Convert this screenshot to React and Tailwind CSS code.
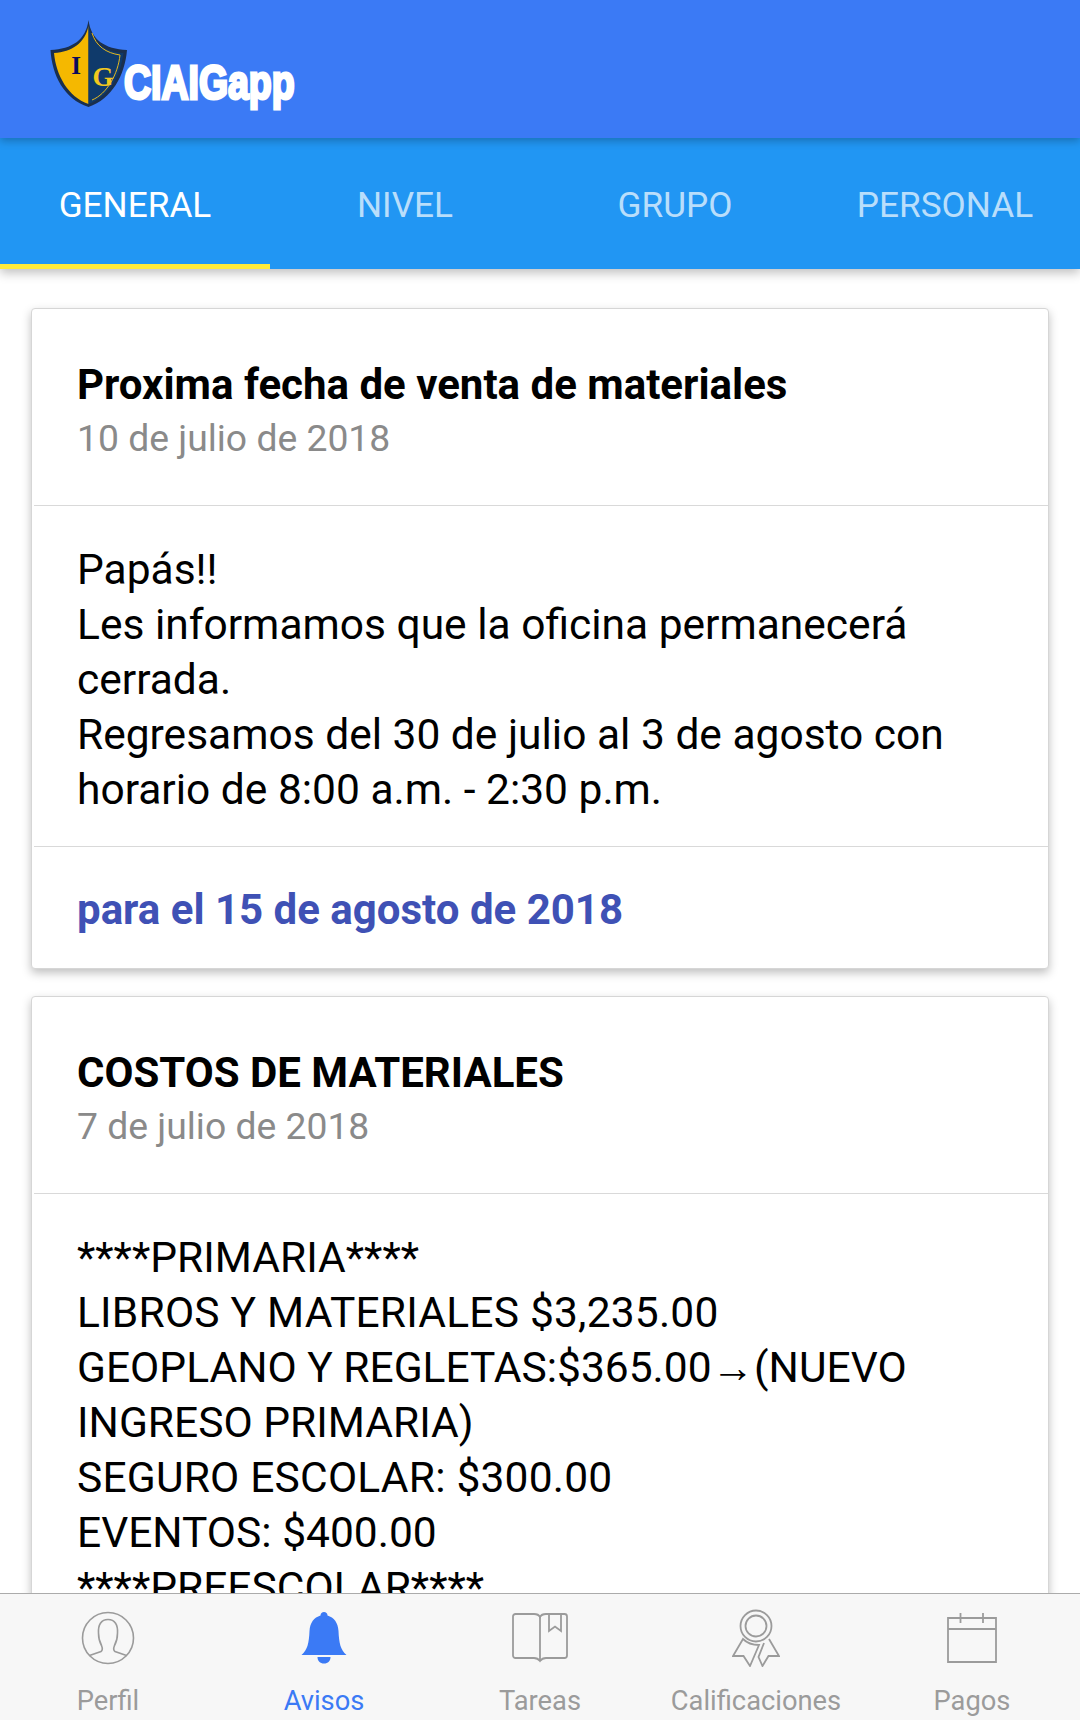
const roboto = "font-['Roboto',sans-serif]"

function Shield() {
    return (
        <svg width="78" height="88" viewBox="0 0 78 88" className="shrink-0">
            <path d="M38.5 0 C36 20 22 29 0.500 30 C2 55 14 79 38.500 87 C62 79 75 55 77 30 C55 29 41 20 38.500 0 Z" fill="#1a2f4d" />
            <path d="M38.500 6 C35 23 22 32 4 33 C6 55 18 77 38.500 84 Z" fill="#f5b800" />
            <path d="M38.500 6 C42 23 55 32 73.500 33 C71 55 59 77 38.500 84 Z" fill="#0f3a6b" />
            <path d="M42 13 C46 26 56 33 70 35 C68 54 57 74 42 80" fill="none" stroke="#e5b91f" strokeWidth="1" />
            <text x="26" y="54" fontFamily="Liberation Serif" fontWeight="700" fontSize="25" fill="#0b0b5c" textAnchor="middle">I</text>
            <text x="53" y="66" fontFamily="Liberation Serif" fontWeight="700" fontSize="27" fill="#f2c81e" textAnchor="middle">G</text>
        </svg>
    )
}

function ProfileIcon() {
    return (
        <svg width="54" height="54" viewBox="0 0 54 54" fill="none" stroke="#9b9b9b" strokeWidth="1.600">
            <circle cx="27" cy="27" r="25.500" />
            <path d="M8.500 44.500 L20 40.500 C21.500 39.500 21.500 37 20.500 34.500 C18 30 17.500 26 17.500 22 C17 14 20 8.500 27 8.500 C34 8.500 37 14 36.500 22 C36.500 26 36 30 33.500 34.500 C32.500 37 32.500 39.500 34 40.500 L45.500 44.500" />
        </svg>
    )
}

function BellIcon() {
    return (
        <svg width="46" height="52" viewBox="0 0 46 52" fill="#3b7af5">
            <path d="M23 0 C25 0 26.500 1.500 26.500 3.500 C33 5.500 37 10.500 37.500 19 C38 31 39.500 38 45.500 43 L0.500 43 C6.500 38 8 31 8.500 19 C9 10.500 13 5.500 19.500 3.500 C19.500 1.500 21 0 23 0 Z" />
            <path d="M16.500 45 L29.500 45 C29.500 49 27 51.500 23 51.500 C19 51.500 16.500 49 16.500 45 Z" />
        </svg>
    )
}

function BookIcon() {
    return (
        <svg width="56" height="50" viewBox="0 0 56 50" fill="none" stroke="#9b9b9b" strokeWidth="1.800">
            <path d="M28 48 C26.500 46 25 45 22 45 L3.500 45 C2 45 1 44 1 42.500 L1 3.500 C1 2 2 1 3.500 1 L22 1 C25 1 27 2 28 4 C29 2 31 1 34 1 L52.500 1 C54 1 55 2 55 3.500 L55 42.500 C55 44 54 45 52.500 45 L34 45 C31 45 29.500 46 28 48 Z" />
            <path d="M28 4 L28 48" />
            <path d="M37 1 L37 18 L43 13.500 L49 18 L49 1" />
        </svg>
    )
}

function RibbonIcon() {
    return (
        <svg width="48" height="58" viewBox="0 0 48 58" fill="none" stroke="#9b9b9b" strokeWidth="1.800">
            <circle cx="24" cy="17" r="15.500" />
            <circle cx="24" cy="17" r="10.500" />
            <path d="M11 30 L1 47 L11.500 47 L18 57 L27 36 C21 36 15 34 11 30 Z" />
            <path d="M37 30 L47 47 L36.500 47 L30.500 57 L26.500 48 L32 34" />
        </svg>
    )
}

function CalendarIcon() {
    return (
        <svg width="50" height="50" viewBox="0 0 50 50" fill="none" stroke="#9b9b9b" strokeWidth="1.800">
            <path d="M1 5 H49 V49 H1 Z" />
            <path d="M1 16 H49" />
            <path d="M13.500 0 V10" />
            <path d="M36 0 V10" />
        </svg>
    )
}

function Card({ title, date, children, footer }) {
    return (
        <div className="mb-[27px] mx-[31px] rounded-[4px] border border-[#d6d6d6] bg-white shadow-[0_4px_10px_rgba(0,0,0,0.25)]">
            <div className="pl-[44px] pr-[30px] pt-[49px] pb-[40px] ml-[2px] border-b border-[#d9d9d9]">
                <div className="-ml-[1px] text-[42px] leading-[54px] font-bold text-black">{title}</div>
                <div className="-ml-[1px] text-[37.3px] leading-[53px] text-[#8a8a8a]">{date}</div>
            </div>
            <div className="pl-[45px] pr-[30px] pt-[36px] pb-[29px] text-[42.5px] leading-[55px] text-black">
                {children}
            </div>
            {footer && (
                <div className="ml-[2px] pl-[43px] pt-[33px] pb-[28px] border-t border-[#d9d9d9] text-[42px] leading-[60px] font-bold text-[#3f51b5]">
                    {footer}
                </div>
            )}
        </div>
    )
}

export default function App() {
    const tabs = ['GENERAL', 'NIVEL', 'GRUPO', 'PERSONAL']
    const navItems = [
        { label: 'Perfil', icon: <ProfileIcon /> },
        { label: 'Avisos', icon: <BellIcon />, active: true },
        { label: 'Tareas', icon: <BookIcon /> },
        { label: 'Calificaciones', icon: <RibbonIcon /> },
        { label: 'Pagos', icon: <CalendarIcon /> },
    ]

    return (
        <div className={`h-[1720px] w-[1080px] flex flex-col overflow-hidden bg-white ${roboto}`}>
            <header className="relative z-10 h-[138px] shrink-0 bg-[#3b7af5] flex items-start pl-[50px] pt-[20px] shadow-[0_3px_8px_rgba(0,0,0,0.25)]">
                <Shield />
                <span className="mt-[38px] -ml-[4px] origin-left scale-x-[0.78] text-[48px] leading-[50px] font-bold text-white font-['Liberation_Sans',sans-serif] [-webkit-text-stroke:3px_white]">
                    CIAIGapp
                </span>
            </header>

            <nav className="h-[131px] shrink-0 bg-[#2196f3] flex shadow-[0_4px_10px_rgba(0,0,0,0.25)] relative">
                {tabs.map((tab, i) => (
                    <div
                        key={tab}
                        className={`flex-1 flex items-center justify-center text-[35.2px] pt-[8px] border-b-[5px] ${i === 0 ? 'text-white border-[#ffeb3b]' : 'text-white/70 border-transparent'}`}
                    >
                        {tab}
                    </div>
                ))}
            </nav>

            <main className="flex-1 overflow-hidden pt-[39px]">
                <Card title="Proxima fecha de venta de materiales" date="10 de julio de 2018" footer="para el 15 de agosto de 2018">
                    Papás!!<br />
                    Les informamos que la oficina permanecerá cerrada.<br />
                    Regresamos del 30 de julio al 3 de agosto con horario de 8:00 a.m. - 2:30 p.m.
                </Card>
                <Card title="COSTOS DE MATERIALES" date="7 de julio de 2018">
                    ****PRIMARIA****<br />
                    <span className="tracking-[0.2px]">LIBROS Y MATERIALES $3,235.00</span><br />
                    GEOPLANO Y REGLETAS:$365.00→(NUEVO INGRESO PRIMARIA)<br />
                    <span className="tracking-[0.2px]">SEGURO ESCOLAR: $300.00</span><br />
                    EVENTOS: $400.00<br />
                    ****PREESCOLAR****
                </Card>
            </main>

            <footer className="h-[127px] shrink-0 bg-[#f7f7f7] border-t border-[#ababab] flex">
                {navItems.map((item) => (
                    <div key={item.label} className="flex-1 flex flex-col items-center">
                        <div className="h-[82px] flex items-center pt-[5px]">{item.icon}</div>
                        <div className={`mt-[8px] text-[27.3px] leading-[34px] ${item.active ? 'text-[#3b7af5]' : 'text-[#9b9b9b]'}`}>{item.label}</div>
                    </div>
                ))}
            </footer>
        </div>
    )
}
